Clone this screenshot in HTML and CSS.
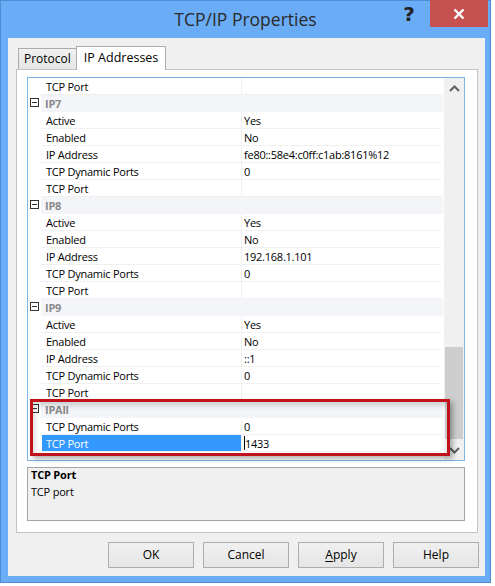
FILE: index.html
```html
<!DOCTYPE html>
<html>
<head>
<meta charset="utf-8">
<title>TCP/IP Properties</title>
<link rel="stylesheet" href="styles.css">
</head>
<body>
<div class="window">
  <div class="titlebar">
    <div class="title">TCP/IP Properties</div>
    <div class="help">?</div>
    <div class="close">
      <svg width="12" height="12" viewBox="0 0 12 12"><path d="M1.5 1.5 L10.5 10.5 M10.5 1.5 L1.5 10.5" stroke="#fff" stroke-width="2.4" fill="none"/></svg>
    </div>
  </div>
  <div class="client">
    <div class="tabs">
      <div class="tab">Protocol</div>
      <div class="tab active">IP Addresses</div>
    </div>
    <div class="panel">
      <div class="grid">
        <div class="rows">
          <div class="row"><div class="mg"></div><div class="nm">TCP Port</div><div class="vl"></div></div>
          <div class="row cat"><div class="mg"><span class="box"></span></div><div class="cl">IP7</div></div>
          <div class="row"><div class="mg"></div><div class="nm">Active</div><div class="vl">Yes</div></div>
          <div class="row"><div class="mg"></div><div class="nm">Enabled</div><div class="vl">No</div></div>
          <div class="row"><div class="mg"></div><div class="nm">IP Address</div><div class="vl">fe80::58e4:c0ff:c1ab:8161%12</div></div>
          <div class="row"><div class="mg"></div><div class="nm">TCP Dynamic Ports</div><div class="vl">0</div></div>
          <div class="row"><div class="mg"></div><div class="nm">TCP Port</div><div class="vl"></div></div>
          <div class="row cat"><div class="mg"><span class="box"></span></div><div class="cl">IP8</div></div>
          <div class="row"><div class="mg"></div><div class="nm">Active</div><div class="vl">Yes</div></div>
          <div class="row"><div class="mg"></div><div class="nm">Enabled</div><div class="vl">No</div></div>
          <div class="row"><div class="mg"></div><div class="nm">IP Address</div><div class="vl">192.168.1.101</div></div>
          <div class="row"><div class="mg"></div><div class="nm">TCP Dynamic Ports</div><div class="vl">0</div></div>
          <div class="row"><div class="mg"></div><div class="nm">TCP Port</div><div class="vl"></div></div>
          <div class="row cat"><div class="mg"><span class="box"></span></div><div class="cl">IP9</div></div>
          <div class="row"><div class="mg"></div><div class="nm">Active</div><div class="vl">Yes</div></div>
          <div class="row"><div class="mg"></div><div class="nm">Enabled</div><div class="vl">No</div></div>
          <div class="row"><div class="mg"></div><div class="nm">IP Address</div><div class="vl">::1</div></div>
          <div class="row"><div class="mg"></div><div class="nm">TCP Dynamic Ports</div><div class="vl">0</div></div>
          <div class="row"><div class="mg"></div><div class="nm">TCP Port</div><div class="vl"></div></div>
          <div class="row cat"><div class="mg"><span class="box"></span></div><div class="cl">IPAll</div></div>
          <div class="row"><div class="mg"></div><div class="nm">TCP Dynamic Ports</div><div class="vl">0</div></div>
          <div class="row sel"><div class="mg"></div><div class="nm">TCP Port</div><div class="vl"><span class="caret"></span>1433</div></div>
        </div>
        <div class="scrollbar">
          <div class="sbtn">
            <svg width="11" height="7" viewBox="0 0 11 7"><path d="M1 6 L5.5 1.5 L10 6" stroke="#606060" stroke-width="2" fill="none"/></svg>
          </div>
          <div class="track"><div class="thumb"></div></div>
          <div class="sbtn">
            <svg width="11" height="7" viewBox="0 0 11 7"><path d="M1 1 L5.5 5.5 L10 1" stroke="#606060" stroke-width="2" fill="none"/></svg>
          </div>
        </div>
      </div>
      <div class="desc">
        <div class="desc-title">TCP Port</div>
        <div class="desc-text">TCP port</div>
      </div>
    </div>
    <div class="buttons">
      <div class="btn">OK</div>
      <div class="btn">Cancel</div>
      <div class="btn"><u>A</u>pply</div>
      <div class="btn">Help</div>
    </div>
  </div>
</div>
<div class="highlight"></div>
</body>
</html>
```

FILE: styles.css
```css
html, body {
  margin: 0;
  padding: 0;
  background: #ffffff;
}
body {
  width: 495px;
  height: 586px;
  position: relative;
  overflow: hidden;
  font-family: "Open Sans", "Noto Sans", sans-serif;
  font-size: 12px;
  color: #000;
}
.window {
  box-sizing: border-box;
  width: 491px;
  height: 583px;
  background: #6aacf6;
  border: 1px solid #4f8cd6;
  display: flex;
  flex-direction: column;
}
.titlebar {
  height: 37px;
  display: flex;
  align-items: flex-start;
}
.title {
  flex: 1;
  text-align: center;
  padding-left: 92px;
  font-size: 17.5px;
  line-height: 37px;
  color: #2a2a2a;
}
.help {
  width: 22px;
  margin-right: 10px;
  font-family: "DejaVu Sans", sans-serif;
  font-weight: bold;
  font-size: 20px;
  line-height: 27px;
  color: #222;
  text-align: center;
}
.close {
  width: 58px;
  height: 27px;
  margin-top: -1px;
  margin-right: 2px;
  background: #c75050;
  display: flex;
  align-items: center;
  justify-content: center;
}
.client {
  margin-left: 7px;
  width: 477px;
  height: 538px;
  box-sizing: border-box;
  background: #f0f0f0;
  padding: 8px 6px 8px 8px;
  display: flex;
  flex-direction: column;
}
.tabs {
  height: 23px;
  display: flex;
  align-items: flex-end;
  padding-left: 2px;
}
.tab {
  box-sizing: border-box;
  height: 21px;
  padding: 0 5px;
  border: 1px solid #acacac;
  border-bottom: none;
  background: linear-gradient(#f0f0f0, #e5e5e5);
  line-height: 20px;
}
.tab.active {
  height: 24px;
  margin-bottom: -1px;
  margin-left: -1px;
  padding: 0 7px;
  background: #ffffff;
  position: relative;
  z-index: 1;
  line-height: 21px;
  font-size: 12.5px;
}
.panel {
  box-sizing: border-box;
  width: 462px;
  height: 464px;
  border: 1px solid #c4c4c4;
  background: #ffffff;
  padding: 7px 11px 0 10px;
}
.grid {
  box-sizing: border-box;
  width: 438px;
  height: 384px;
  border: 1px solid #7eb4ea;
  display: flex;
  background: #fff;
  font-size: 11px;
  letter-spacing: -0.25px;
}
.rows {
  width: 415px;
  display: flex;
  flex-direction: column;
}
.row {
  display: flex;
  height: 17px;
  line-height: 17px;
}
.mg {
  width: 13px;
  flex: none;
}
.nm {
  box-sizing: border-box;
  width: 201px;
  flex: none;
  padding-left: 5px;
  border-bottom: 1px solid #f0f0f0;
  border-right: 1px solid #f0f0f0;
  white-space: nowrap;
}
.vl {
  box-sizing: border-box;
  flex: 1;
  padding-left: 2px;
  border-bottom: 1px solid #f0f0f0;
  margin-right: 2px;
  white-space: nowrap;
  display: flex;
  align-items: center;
}
.cat .cl {
  flex: 1;
  background: #f3f5f9;
  color: #8a8a8a;
  font-weight: bold;
  padding-left: 4px;
  line-height: 18px;
}
.box {
  display: block;
  box-sizing: border-box;
  width: 9px;
  height: 9px;
  margin: 3px 0 0 2px;
  border: 1px solid #333;
  background: linear-gradient(#333, #333) center / 5px 1px no-repeat, #fff;
}
.sel .nm {
  background: #3399ff;
  color: #fff;
  border-left: 1px solid #fff;
  padding-left: 4px;
}
.caret {
  display: inline-block;
  width: 1px;
  height: 14px;
  background: #000;
}
.scrollbar {
  flex: 1;
  background: #f0f0f0;
  display: flex;
  flex-direction: column;
  margin-left: 1px;
}
.sbtn {
  height: 20px;
  display: flex;
  align-items: center;
  justify-content: center;
}
.track {
  flex: 1;
  display: flex;
  flex-direction: column;
  justify-content: flex-end;
  padding: 0 1px 1px 1px;
}
.thumb {
  height: 92px;
  background: #cdcdcd;
}
.desc {
  box-sizing: border-box;
  width: 438px;
  height: 54px;
  margin-top: 6px;
  border: 1px solid #a5a5a5;
  background: #f0f0f0;
  padding-left: 3px;
  line-height: 16px;
  font-size: 11px;
  letter-spacing: -0.2px;
}
.desc-title {
  font-weight: bold;
  margin-top: -1px;
  margin-bottom: 1px;
}
.buttons {
  margin-top: 9px;
  display: flex;
  justify-content: flex-end;
  gap: 9px;
}
.btn {
  box-sizing: border-box;
  width: 86px;
  height: 26px;
  border: 1px solid #adadad;
  background: linear-gradient(#f0f0f0, #e5e5e5);
  text-align: center;
  line-height: 24px;
}
.btn u {
  text-decoration-thickness: 1px;
  text-underline-offset: 2px;
}
.highlight {
  position: absolute;
  left: 30px;
  top: 399px;
  width: 420px;
  height: 57px;
  box-sizing: border-box;
  border: 3px solid #c0121b;
  box-shadow: 3px 3px 5px rgba(0, 0, 0, 0.3), inset 2px 4px 5px rgba(0, 0, 0, 0.14);
}
```
